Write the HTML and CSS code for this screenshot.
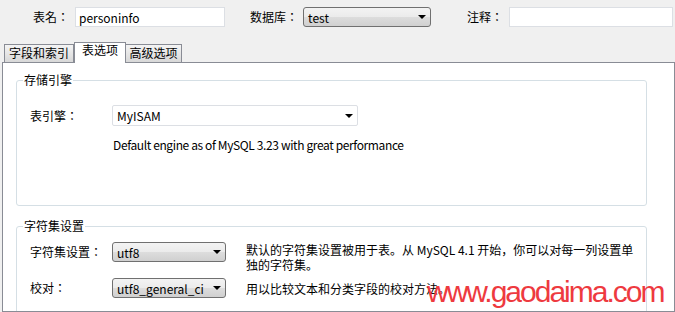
FILE: index.html
```html
<!DOCTYPE html>
<html lang="zh-CN">

<head>
    <meta charset="UTF-8">
    <title>表选项</title>
    <link rel="stylesheet" href="styles.css">
</head>

<body>
    <div class="top-bar">
        <span class="top-label label-name">表名：</span>
        <input type="text" class="text-input input-name" value="personinfo">
        <span class="top-label label-db">数据库：</span>
        <div class="combo combo-db"><span>test</span><span class="arrow"></span></div>
        <span class="top-label label-comment">注释：</span>
        <input type="text" class="text-input input-comment" value="">
    </div>

    <div class="tabs">
        <div class="tab tab-fields">字段和索引</div>
        <div class="tab tab-active">表选项</div>
        <div class="tab tab-advanced">高级选项</div>
    </div>

    <div class="panel">
        <fieldset class="group group-engine">
            <legend class="group-title">存储引擎</legend>
            <div class="form-row row-engine">
                <span class="row-label">表引擎：</span>
                <div class="combo combo-flat"><span>MyISAM</span><span class="arrow"></span></div>
            </div>
            <div class="engine-note">Default engine as of MySQL 3.23 with great performance</div>
        </fieldset>

        <fieldset class="group group-charset">
            <legend class="group-title">字符集设置</legend>
            <div class="form-row row-charset">
                <span class="row-label">字符集设置：</span>
                <div class="combo combo-small"><span>utf8</span><span class="arrow"></span></div>
                <div class="row-note">默认的字符集设置被用于表。从 MySQL 4.1 开始，你可以对每一列设置单独的字符集。</div>
            </div>
            <div class="form-row row-collation">
                <span class="row-label">校对：</span>
                <div class="combo combo-small"><span>utf8_general_ci</span><span class="arrow"></span></div>
                <div class="row-note">用以比较文本和分类字段的校对方法。</div>
            </div>
        </fieldset>
    </div>

    <div class="watermark">www.gaodaima.com</div>
</body>

</html>
```

FILE: styles.css
```css
body {
    margin: 0;
    width: 675px;
    height: 312px;
    overflow: hidden;
    position: relative;
    background-color: #f0f0f0;
    color: #000;
    font-family: "Noto Sans CJK SC", "Noto Sans", sans-serif;
    font-size: 12px;
}

.top-bar {
    display: flex;
    align-items: center;
    height: 20px;
    padding-top: 7px;
}

/* labels use the TC cut so the full-width colon sits centred */
.top-label,
.row-label {
    font-family: "Noto Sans CJK TC", "Noto Sans CJK SC", sans-serif;
    font-feature-settings: "locl" 0;
    white-space: nowrap;
}

.top-label {
    line-height: 20px;
}

.label-name {
    margin-left: 33px;
}

.label-db {
    margin-left: 25px;
}

.label-comment {
    margin-left: 36px;
}

.text-input {
    box-sizing: border-box;
    height: 20px;
    margin: 0 0 0 6px;
    padding: 0 3px;
    border: 1px solid #dcdfe4;
    background-color: #fff;
    font: inherit;
    color: #000;
    outline: none;
}

.input-name {
    width: 150px;
}

.input-comment {
    width: 164px;
}

.combo {
    box-sizing: border-box;
    display: flex;
    align-items: center;
    justify-content: space-between;
    height: 20px;
    padding: 0 4px 0 4px;
    border: 1px solid #707070;
    border-radius: 3px;
    background: linear-gradient(#f3f3f3, #ebebeb 50%, #dddddd 50%, #d0d0d0);
    white-space: nowrap;
}

.combo-db {
    width: 128px;
    margin-left: 5px;
}

.combo-flat {
    width: 246px;
    height: 21px;
    border: 1px solid #dcdfe4;
    border-radius: 2px;
    background: #fff;
}

.combo-small {
    width: 114px;
}

.arrow {
    width: 0;
    height: 0;
    border-left: 4px solid transparent;
    border-right: 4px solid transparent;
    border-top: 4px solid #000;
}

.tabs {
    display: flex;
    align-items: flex-end;
    height: 20px;
    margin: 15px 0 0 4px;
}

.tab {
    box-sizing: border-box;
    height: 18px;
    border: 1px solid #898c95;
    border-bottom: none;
    background: linear-gradient(#f4f4f4, #e6e6e6 50%, #d8d8d8);
    line-height: 15px;
    text-align: center;
    white-space: nowrap;
}

.tab-fields {
    width: 70px;
}

.tab-active {
    position: relative;
    z-index: 1;
    width: 52px;
    height: 21px;
    margin-bottom: -1px;
    background: #fff;
    line-height: 13px;
}

.tab-advanced {
    width: 57px;
    margin-left: -1px;
}

.panel {
    box-sizing: border-box;
    height: 250px;
    overflow: hidden;
    margin-left: 2px;
    padding: 9px 27px 0 13px;
    border: 1px solid #898c95;
    background-color: #fff;
}

.group {
    margin: 0;
    padding: 0;
    border: 1px solid #d5dfe5;
    border-radius: 3px;
}

.group-title {
    margin-left: 6px;
    padding: 0 1px;
    line-height: 16px;
}

.group-engine {
    padding-bottom: 52px;
}

.group-charset {
    margin-top: 12px;
    padding-bottom: 40px;
}

.form-row {
    display: flex;
    padding-left: 13px;
}

.row-label {
    width: 82px;
    line-height: 20px;
}

.row-engine {
    align-items: center;
    margin-top: 17px;
}

.engine-note {
    margin-top: 11px;
    padding-left: 96px;
    line-height: 16px;
    letter-spacing: -0.38px;
}

.row-charset {
    align-items: flex-start;
    margin-top: 8px;
}

.row-collation {
    align-items: center;
    margin-top: 6px;
}

.row-note {
    width: 390px;
    margin-left: 20px;
    line-height: 15px;
}

.watermark {
    position: absolute;
    left: 427px;
    top: 277px;
    font-family: "Liberation Sans", Arial, sans-serif;
    font-size: 30px;
    line-height: 30px;
    letter-spacing: -2px;
    color: #ee3a3f;
    white-space: nowrap;
}
```
